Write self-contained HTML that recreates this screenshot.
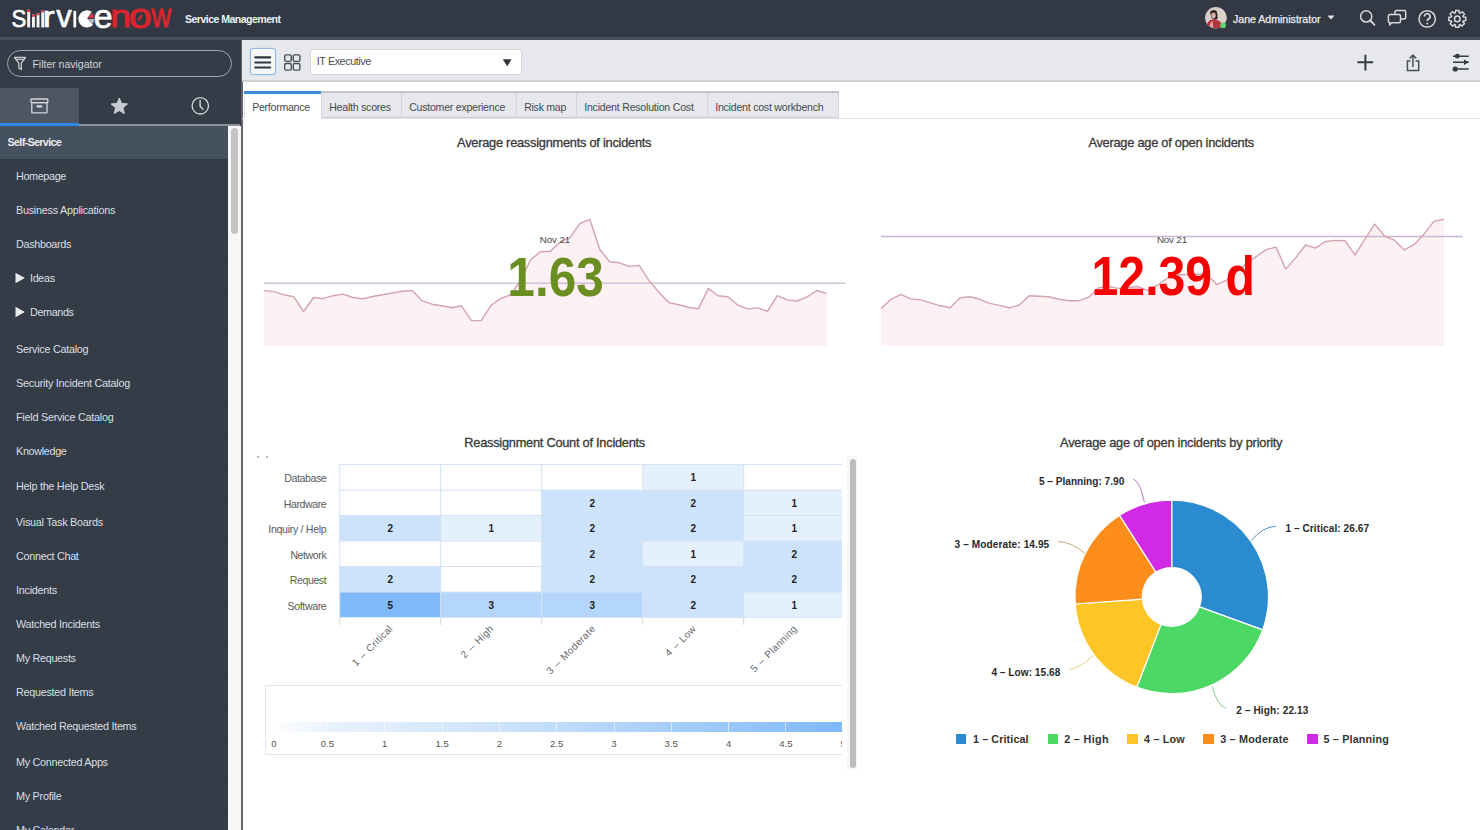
<!DOCTYPE html><html><head><meta charset="utf-8"><style>
*{box-sizing:border-box;margin:0;padding:0}
html,body{width:1480px;height:830px;overflow:hidden;background:#fff;font-family:"Liberation Sans",sans-serif}
.a{position:absolute;white-space:nowrap}
svg{position:absolute;overflow:visible}
</style></head><body>
<div class="a" style="left:0;top:0;width:1480px;height:37px;background:#323945"></div>
<div class="a" style="left:0;top:37px;width:1480px;height:3px;background:#46525e"></div>
<svg style="left:0;top:0" width="200" height="37"><text transform="translate(11.39,27.20) scale(0.897,1)" font-family="Liberation Sans" font-weight="normal" font-size="24.78" fill="#fff" stroke="#fff" stroke-width="0.7" stroke-linejoin="round">S</text><rect x="27.2" y="9.8" width="2.9" height="17.6" fill="#f4f4f4"/><rect x="27.2" y="9.8" width="2.9" height="2.2" fill="#d33a3f"/><rect x="32" y="14.6" width="2.9" height="12.8" fill="#f4f4f4"/><rect x="32" y="14.6" width="2.9" height="2.2" fill="#d33a3f"/><rect x="36.6" y="13.1" width="2.9" height="14.3" fill="#f4f4f4"/><rect x="36.6" y="13.1" width="2.9" height="2.2" fill="#d33a3f"/><rect x="41.3" y="10.1" width="2.9" height="17.3" fill="#f4f4f4"/><rect x="41.3" y="10.1" width="2.9" height="2.2" fill="#d33a3f"/><text transform="translate(42.74,27.40) scale(1.190,1)" font-family="Liberation Sans" font-weight="normal" font-size="29.92" fill="#fff" stroke="#fff" stroke-width="0.7" stroke-linejoin="round">r</text><text transform="translate(56.19,27.40) scale(1.018,1)" font-family="Liberation Sans" font-weight="normal" font-size="30.47" fill="#fff" stroke="#fff" stroke-width="0.7" stroke-linejoin="round">v</text><rect x="73.4" y="10.9" width="2.8" height="16.5" fill="#fff"/><g transform="translate(87.2,18.6)"><path d="M0,0 L4.6,-6.8 A8.6,8.6 0 1,0 5.9,6.3 Z" fill="#fff"/><path d="M0.6,-0.6 L4.5,-5.6 A7,7 0 0,1 7.1,-0.6 Z" fill="#d9353b"/><path d="M0.6,0.4 L7.1,0.4 A7,7 0 0,1 5,5.4 Z" fill="#b8bcc2"/></g><text transform="translate(93.86,27.50) scale(1.019,1)" font-family="Liberation Sans" font-weight="normal" font-size="33.27" fill="#fff" stroke="#fff" stroke-width="0.7" stroke-linejoin="round">e</text><text transform="translate(110.23,27.40) scale(1.157,1)" font-family="Liberation Sans" font-weight="normal" font-size="32.15" fill="#d9252c" stroke="#d9252c" stroke-width="1.0" stroke-linejoin="round">n</text><text transform="translate(128.87,28.30) scale(1.188,1)" font-family="Liberation Sans" font-weight="normal" font-size="34.75" fill="#d9252c" stroke="#d9252c" stroke-width="1.0" stroke-linejoin="round">o</text><path d="M138.6,19.9 L141.2,16" stroke="#d9252c" stroke-width="2.2" stroke-linecap="round"/><text transform="translate(151.54,27.40) scale(0.829,1)" font-family="Liberation Sans" font-weight="normal" font-size="32.75" fill="#d9252c" stroke="#d9252c" stroke-width="1.0" stroke-linejoin="round">w</text></svg>
<div class="a" style="left:185.0px;top:13.6px;font-size:10.6px;line-height:10.6px;color:#eef0f2;font-weight:bold;letter-spacing:-0.556px;">Service Management</div>
<svg style="left:1205px;top:7px" width="24" height="24">
<defs><clipPath id="av"><circle cx="10.8" cy="10.8" r="10.7"/></clipPath></defs>
<g clip-path="url(#av)">
<rect x="0" y="0" width="22" height="22" fill="#d6cdc8"/>
<rect x="13" y="2" width="9" height="12" fill="#ddd2c6"/>
<path d="M5,5 Q8,1.5 11.5,4 Q13,8 12.5,12 L9.5,13 L6.5,11Z" fill="#2c2222"/>
<ellipse cx="8.5" cy="8.5" rx="2.2" ry="3" fill="#d9b0a8"/>
<path d="M1,22 Q2,13 7,12.5 L12,13 Q17,14 18,22Z" fill="#b5343a"/>
<path d="M4,22 Q5,15 7.5,14 L8.5,22Z" fill="#dca9a4"/>
</g>
<circle cx="18.1" cy="18.3" r="2.9" fill="#5fd86f"/>
</svg>
<div class="a" style="left:1233.0px;top:13.6px;font-size:10.6px;line-height:10.6px;color:#eef0f2;font-weight:normal;letter-spacing:-0.011px;-webkit-text-stroke:0.25px #eef0f2;">Jane Administrator</div>
<svg style="left:1327px;top:15px" width="9" height="6"><path d="M0.5,0.5 L7.5,0.5 L4,4.5Z" fill="#e4e6e9"/></svg>
<svg style="left:1355px;top:6px" width="120" height="26" fill="none" stroke="#d7dadd" stroke-width="1.5">
<circle cx="11.2" cy="10.4" r="5.6"/><path d="M15.3,14.5 L19.5,18.8" stroke-width="1.8" stroke-linecap="round"/>
<rect x="39.9" y="4.6" width="10.8" height="8.5" rx="1.5"/>
<path d="M34.4,8.4 h9.6 a1.5,1.5 0 0 1 1.5,1.5 v5.3 a1.5,1.5 0 0 1 -1.5,1.5 h-7 l-2.2,1.9 v-1.9 a1.5,1.5 0 0 1 -1.4,-1.5 v-5.3 a1.5,1.5 0 0 1 1.5,-1.5z" fill="#323945"/>
<circle cx="72.2" cy="12.9" r="8.2"/>
<path d="M69.4,10.6 a2.8,2.8 0 1 1 3.9,2.5 c-0.9,0.4 -1.1,1 -1.1,2" stroke-width="1.7"/>
<circle cx="72.2" cy="17.6" r="0.6" fill="#d7dadd" stroke-width="1"/>
</svg>
<svg style="left:0;top:0" width="1480" height="40"><path d="M1455.30,12.93 L1455.66,10.46 L1458.94,10.46 L1459.30,12.93 L1460.11,13.26 L1462.11,11.77 L1464.43,14.09 L1462.94,16.09 L1463.27,16.90 L1465.74,17.26 L1465.74,20.54 L1463.27,20.90 L1462.94,21.71 L1464.43,23.71 L1462.11,26.03 L1460.11,24.54 L1459.30,24.87 L1458.94,27.34 L1455.66,27.34 L1455.30,24.87 L1454.49,24.54 L1452.49,26.03 L1450.17,23.71 L1451.66,21.71 L1451.33,20.90 L1448.86,20.54 L1448.86,17.26 L1451.33,16.90 L1451.66,16.09 L1450.17,14.09 L1452.49,11.77 L1454.49,13.26Z" fill="none" stroke="#d7dadd" stroke-width="1.5" stroke-linejoin="round"/><circle cx="1457.3" cy="18.9" r="2.8" fill="none" stroke="#d7dadd" stroke-width="1.5"/></svg>
<div class="a" style="left:0;top:40px;width:241px;height:790px;background:#343c47"></div>
<div class="a" style="left:7px;top:50.2px;width:225px;height:27.3px;border:1.7px solid #a3a8ae;border-radius:14px"></div>
<svg style="left:13px;top:56px" width="16" height="17"><path d="M1.5,1.5 H12.5 L8.3,7.2 V13.5 L5.8,12 V7.2 Z" fill="none" stroke="#c9cdd2" stroke-width="1.3" stroke-linejoin="round"/><path d="M3,3.5 H11" stroke="#c9cdd2" stroke-width="1"/></svg>
<div class="a" style="left:32.4px;top:58.7px;font-size:10.5px;line-height:10.5px;color:#d3d6da;font-weight:normal;letter-spacing:-0.003px;">Filter navigator</div>
<div class="a" style="left:0;top:88px;width:79px;height:35px;background:#4d5662"></div>
<div class="a" style="left:0;top:123px;width:79px;height:3px;background:#2c88e6"></div>
<div class="a" style="left:79px;top:124px;width:161px;height:2px;background:#8d9298"></div>
<svg style="left:0;top:88px" width="240" height="35" fill="none" stroke="#d5d8dc" stroke-width="1.3">
<rect x="31" y="11" width="16.8" height="3.6" rx="0.6"/>
<rect x="31.8" y="14.6" width="15.2" height="10.2" rx="0.6"/>
<rect x="36.3" y="17.2" width="6.2" height="2.2" rx="1.1" fill="#d5d8dc" stroke="none"/>
<circle cx="200.3" cy="17.8" r="8.2"/>
<path d="M200.1,12 V18.2 L203.4,21.8" stroke-width="1.4"/>
</svg>
<svg style="left:0;top:0" width="240" height="130"><path d="M119.30,98.00 L121.59,103.44 L127.48,103.94 L123.01,107.81 L124.35,113.56 L119.30,110.50 L114.25,113.56 L115.59,107.81 L111.12,103.94 L117.01,103.44Z" fill="#c8ccd2" stroke="#c8ccd2" stroke-width="1" stroke-linejoin="round"/></svg>
<div class="a" style="left:0;top:126px;width:228px;height:33px;background:#465160"></div>
<div class="a" style="left:7.5px;top:136.7px;font-size:10.8px;line-height:10.8px;color:#e8eaed;font-weight:bold;letter-spacing:-0.685px;">Self-Service</div>
<div class="a" style="left:228px;top:126px;width:12.5px;height:704px;background:#f7f7f7"></div>
<div class="a" style="left:231px;top:128px;width:7px;height:106px;border-radius:4px;background:#c3c3c3"></div>
<div class="a" style="left:240.5px;top:40px;width:2px;height:790px;background:#62666c"></div>
<div class="a" style="left:16.0px;top:171.4px;font-size:10.8px;line-height:10.8px;color:#dcdfe3;font-weight:normal;letter-spacing:-0.362px;">Homepage</div>
<div class="a" style="left:16.0px;top:205.4px;font-size:10.8px;line-height:10.8px;color:#dcdfe3;font-weight:normal;letter-spacing:-0.251px;">Business Applications</div>
<div class="a" style="left:0;top:192px;width:228px;height:1px;background:#313842"></div>
<div class="a" style="left:16.0px;top:239.4px;font-size:10.8px;line-height:10.8px;color:#dcdfe3;font-weight:normal;letter-spacing:-0.311px;">Dashboards</div>
<div class="a" style="left:0;top:226px;width:228px;height:1px;background:#313842"></div>
<svg style="left:15px;top:271.7px" width="12" height="13"><path d="M0.5,0.8 L9.9,6 L0.5,11.3Z" fill="#e8eaed"/></svg>
<div class="a" style="left:30.0px;top:273.4px;font-size:10.8px;line-height:10.8px;color:#dcdfe3;font-weight:normal;letter-spacing:-0.317px;">Ideas</div>
<div class="a" style="left:0;top:260px;width:228px;height:1px;background:#313842"></div>
<svg style="left:15px;top:305.7px" width="12" height="13"><path d="M0.5,0.8 L9.9,6 L0.5,11.3Z" fill="#e8eaed"/></svg>
<div class="a" style="left:30.0px;top:307.4px;font-size:10.8px;line-height:10.8px;color:#dcdfe3;font-weight:normal;letter-spacing:-0.370px;">Demands</div>
<div class="a" style="left:0;top:294px;width:228px;height:1px;background:#313842"></div>
<div class="a" style="left:16.0px;top:344.4px;font-size:10.8px;line-height:10.8px;color:#dcdfe3;font-weight:normal;letter-spacing:-0.261px;">Service Catalog</div>
<div class="a" style="left:0;top:330px;width:228px;height:1px;background:#313842"></div>
<div class="a" style="left:16.0px;top:378.4px;font-size:10.8px;line-height:10.8px;color:#dcdfe3;font-weight:normal;letter-spacing:-0.240px;">Security Incident Catalog</div>
<div class="a" style="left:0;top:366px;width:228px;height:1px;background:#313842"></div>
<div class="a" style="left:16.0px;top:412.4px;font-size:10.8px;line-height:10.8px;color:#dcdfe3;font-weight:normal;letter-spacing:-0.246px;">Field Service Catalog</div>
<div class="a" style="left:0;top:400px;width:228px;height:1px;background:#313842"></div>
<div class="a" style="left:16.0px;top:446.4px;font-size:10.8px;line-height:10.8px;color:#dcdfe3;font-weight:normal;letter-spacing:-0.321px;">Knowledge</div>
<div class="a" style="left:0;top:434px;width:228px;height:1px;background:#313842"></div>
<div class="a" style="left:16.0px;top:480.9px;font-size:10.8px;line-height:10.8px;color:#dcdfe3;font-weight:normal;letter-spacing:-0.263px;">Help the Help Desk</div>
<div class="a" style="left:0;top:468px;width:228px;height:1px;background:#313842"></div>
<div class="a" style="left:16.0px;top:516.9px;font-size:10.8px;line-height:10.8px;color:#dcdfe3;font-weight:normal;letter-spacing:-0.258px;">Visual Task Boards</div>
<div class="a" style="left:0;top:503px;width:228px;height:1px;background:#313842"></div>
<div class="a" style="left:16.0px;top:550.9px;font-size:10.8px;line-height:10.8px;color:#dcdfe3;font-weight:normal;letter-spacing:-0.288px;">Connect Chat</div>
<div class="a" style="left:0;top:538px;width:228px;height:1px;background:#313842"></div>
<div class="a" style="left:16.0px;top:584.9px;font-size:10.8px;line-height:10.8px;color:#dcdfe3;font-weight:normal;letter-spacing:-0.259px;">Incidents</div>
<div class="a" style="left:0;top:572px;width:228px;height:1px;background:#313842"></div>
<div class="a" style="left:16.0px;top:618.9px;font-size:10.8px;line-height:10.8px;color:#dcdfe3;font-weight:normal;letter-spacing:-0.265px;">Watched Incidents</div>
<div class="a" style="left:0;top:606px;width:228px;height:1px;background:#313842"></div>
<div class="a" style="left:16.0px;top:652.9px;font-size:10.8px;line-height:10.8px;color:#dcdfe3;font-weight:normal;letter-spacing:-0.303px;">My Requests</div>
<div class="a" style="left:0;top:640px;width:228px;height:1px;background:#313842"></div>
<div class="a" style="left:16.0px;top:686.9px;font-size:10.8px;line-height:10.8px;color:#dcdfe3;font-weight:normal;letter-spacing:-0.280px;">Requested Items</div>
<div class="a" style="left:0;top:674px;width:228px;height:1px;background:#313842"></div>
<div class="a" style="left:16.0px;top:720.9px;font-size:10.8px;line-height:10.8px;color:#dcdfe3;font-weight:normal;letter-spacing:-0.277px;">Watched Requested Items</div>
<div class="a" style="left:0;top:708px;width:228px;height:1px;background:#313842"></div>
<div class="a" style="left:16.0px;top:756.9px;font-size:10.8px;line-height:10.8px;color:#dcdfe3;font-weight:normal;letter-spacing:-0.290px;">My Connected Apps</div>
<div class="a" style="left:0;top:743px;width:228px;height:1px;background:#313842"></div>
<div class="a" style="left:16.0px;top:790.9px;font-size:10.8px;line-height:10.8px;color:#dcdfe3;font-weight:normal;letter-spacing:-0.256px;">My Profile</div>
<div class="a" style="left:0;top:778px;width:228px;height:1px;background:#313842"></div>
<div class="a" style="left:16.0px;top:824.9px;font-size:10.8px;line-height:10.8px;color:#dcdfe3;font-weight:normal;letter-spacing:-0.294px;">My Calendar</div>
<div class="a" style="left:0;top:812px;width:228px;height:1px;background:#313842"></div>
<div class="a" style="left:242px;top:40px;width:1238px;height:40px;background:#e6e8eb"></div>
<div class="a" style="left:242px;top:80px;width:1238px;height:1.5px;background:#cdd0d4"></div>
<div class="a" style="left:249.5px;top:48px;width:26px;height:27px;border:1.3px solid #8fb8e6;border-radius:3px;background:#f4f6f8;box-shadow:0 0 2px #b9d3f0"></div>
<svg style="left:249px;top:48px" width="28" height="28"><path d="M6.3,9.4 H21.2 M6.3,14.5 H21.2 M6.3,19.5 H21.2" stroke="#2f3540" stroke-width="2.1" stroke-linecap="round"/></svg>
<svg style="left:283px;top:53px" width="20" height="20" fill="none" stroke="#4a5058" stroke-width="1.4"><rect x="1.7" y="1.9" width="6.6" height="6.5" rx="1.4"/><rect x="10.3" y="1.9" width="6.6" height="6.5" rx="1.4"/><rect x="1.7" y="10.5" width="6.6" height="6.6" rx="1.4"/><rect x="10.3" y="10.5" width="6.6" height="6.6" rx="1.4"/></svg>
<div class="a" style="left:309.5px;top:48.5px;width:212px;height:26px;border:1px solid #d5d8dc;border-radius:3px;background:#fff"></div>
<div class="a" style="left:316.8px;top:56.2px;font-size:10.8px;line-height:10.8px;color:#4a4d52;font-weight:normal;letter-spacing:-0.439px;">IT Executive</div>
<svg style="left:502px;top:58px" width="11" height="10"><path d="M0.8,1.2 H9.6 L5.2,8.2Z" fill="#2f3338"/></svg>
<svg style="left:1340px;top:42px" width="140" height="38">
<path d="M17.5,20.3 H33.1 M25.4,12.8 V28.4" stroke="#353b45" stroke-width="2"/>
<path d="M70.5,19 H67.4 V28.4 H78.7 V19 H75.6" fill="none" stroke="#4a4f57" stroke-width="1.5"/>
<path d="M72.9,25 V14 M69.6,16.5 L72.9,13 L76.2,16.5" fill="none" stroke="#4a4f57" stroke-width="1.5"/>
<path d="M113,14.2 H128.7 M113,20.3 H128.7 M113,27 H128.7" stroke="#353b45" stroke-width="1.5"/>
<circle cx="117.3" cy="14.2" r="2.4" fill="#353b45"/>
<path d="M124,17.6 L128.7,20.3 L124,23Z" fill="#353b45"/>
<circle cx="115.2" cy="27" r="2.6" fill="#353b45"/>
</svg>
<div class="a" style="left:242px;top:117.5px;width:1238px;height:1px;background:#e3e5e8"></div>
<div class="a" style="left:244px;top:91px;width:77px;height:28px;background:#fff;border-left:1px solid #e1e3e6"></div>
<div class="a" style="left:244px;top:91px;width:77px;height:3px;background:#3d8ddb"></div>
<div class="a" style="left:252.2px;top:101.8px;font-size:10.6px;line-height:10.6px;color:#474a4f;font-weight:normal;letter-spacing:-0.273px;">Performance</div>
<div class="a" style="left:321px;top:91px;width:81px;height:27px;background:#e6e8eb;border-left:1px solid #d2d5d9;border-right:1px solid #d2d5d9;border-bottom:1px solid #c9ccd0"></div>
<div class="a" style="left:321px;top:91px;width:81px;height:2px;background:#c0c3c7"></div>
<div class="a" style="left:329.2px;top:101.8px;font-size:10.6px;line-height:10.6px;color:#474a4f;font-weight:normal;letter-spacing:-0.243px;">Health scores</div>
<div class="a" style="left:401px;top:91px;width:116px;height:27px;background:#e6e8eb;border-left:1px solid #d2d5d9;border-right:1px solid #d2d5d9;border-bottom:1px solid #c9ccd0"></div>
<div class="a" style="left:401px;top:91px;width:116px;height:2px;background:#c0c3c7"></div>
<div class="a" style="left:409.2px;top:101.8px;font-size:10.6px;line-height:10.6px;color:#474a4f;font-weight:normal;letter-spacing:-0.252px;">Customer experience</div>
<div class="a" style="left:516px;top:91px;width:61px;height:27px;background:#e6e8eb;border-left:1px solid #d2d5d9;border-right:1px solid #d2d5d9;border-bottom:1px solid #c9ccd0"></div>
<div class="a" style="left:516px;top:91px;width:61px;height:2px;background:#c0c3c7"></div>
<div class="a" style="left:524.2px;top:101.8px;font-size:10.6px;line-height:10.6px;color:#474a4f;font-weight:normal;letter-spacing:-0.284px;">Risk map</div>
<div class="a" style="left:576px;top:91px;width:132px;height:27px;background:#e6e8eb;border-left:1px solid #d2d5d9;border-right:1px solid #d2d5d9;border-bottom:1px solid #c9ccd0"></div>
<div class="a" style="left:576px;top:91px;width:132px;height:2px;background:#c0c3c7"></div>
<div class="a" style="left:584.2px;top:101.8px;font-size:10.6px;line-height:10.6px;color:#474a4f;font-weight:normal;letter-spacing:-0.225px;">Incident Resolution Cost</div>
<div class="a" style="left:707px;top:91px;width:132px;height:27px;background:#e6e8eb;border-left:1px solid #d2d5d9;border-right:1px solid #d2d5d9;border-bottom:1px solid #c9ccd0"></div>
<div class="a" style="left:707px;top:91px;width:132px;height:2px;background:#c0c3c7"></div>
<div class="a" style="left:715.2px;top:101.8px;font-size:10.6px;line-height:10.6px;color:#474a4f;font-weight:normal;letter-spacing:-0.233px;">Incident cost workbench</div>
<div class="a" style="left:457.1px;top:137.2px;font-size:12.8px;line-height:12.8px;color:#383838;font-weight:normal;letter-spacing:-0.246px;-webkit-text-stroke:0.3px #383838;">Average reassignments of incidents</div>
<div class="a" style="left:1088.4px;top:137.2px;font-size:12.8px;line-height:12.8px;color:#383838;font-weight:normal;letter-spacing:-0.247px;-webkit-text-stroke:0.3px #383838;">Average age of open incidents</div>
<div class="a" style="left:464.3px;top:436.7px;font-size:12.8px;line-height:12.8px;color:#383838;font-weight:normal;letter-spacing:-0.251px;-webkit-text-stroke:0.3px #383838;">Reassignment Count of Incidents</div>
<div class="a" style="left:1060.1px;top:436.7px;font-size:12.8px;line-height:12.8px;color:#383838;font-weight:normal;letter-spacing:-0.232px;-webkit-text-stroke:0.3px #383838;">Average age of open incidents by priority</div>
<svg style="left:0;top:0" width="1480" height="400"><path d="M264.1,346 L264.1,290.6 L274.0,291.6 L283.8,294.7 L293.7,296.7 L303.6,311.5 L313.5,297.5 L323.3,298.7 L333.2,295.7 L343.1,294.1 L352.9,297.5 L362.8,298.7 L372.7,296.5 L382.5,294.7 L392.4,293.0 L402.3,291.2 L412.2,290.6 L422.0,300.7 L431.9,304.2 L441.8,305.8 L451.6,307.8 L461.5,305.8 L471.4,320.6 L481.2,320.6 L491.1,305.4 L501.0,298.3 L510.9,294.7 L520.7,280.1 L530.6,259.8 L540.5,251.7 L550.3,251.3 L560.2,241.9 L570.1,237.7 L579.9,223.5 L589.8,219.3 L599.7,249.2 L609.6,261.8 L619.4,262.8 L629.3,266.4 L639.2,265.4 L649.0,280.6 L658.9,292.2 L668.8,302.6 L678.6,304.7 L688.5,307.2 L698.4,308.9 L708.3,288.4 L718.1,295.7 L728.0,296.8 L737.9,305.2 L747.7,308.9 L757.6,307.9 L767.5,311.4 L777.3,295.7 L787.2,299.9 L797.1,301.0 L807.0,296.8 L816.8,290.5 L826.7,293.6 L826.7,346Z" fill="#fdf1f3"/><path d="M264.1,283.1 H845.6" stroke="#c9b6d2" stroke-width="1.3"/><polyline points="264.1,290.6 274.0,291.6 283.8,294.7 293.7,296.7 303.6,311.5 313.5,297.5 323.3,298.7 333.2,295.7 343.1,294.1 352.9,297.5 362.8,298.7 372.7,296.5 382.5,294.7 392.4,293.0 402.3,291.2 412.2,290.6 422.0,300.7 431.9,304.2 441.8,305.8 451.6,307.8 461.5,305.8 471.4,320.6 481.2,320.6 491.1,305.4 501.0,298.3 510.9,294.7 520.7,280.1 530.6,259.8 540.5,251.7 550.3,251.3 560.2,241.9 570.1,237.7 579.9,223.5 589.8,219.3 599.7,249.2 609.6,261.8 619.4,262.8 629.3,266.4 639.2,265.4 649.0,280.6 658.9,292.2 668.8,302.6 678.6,304.7 688.5,307.2 698.4,308.9 708.3,288.4 718.1,295.7 728.0,296.8 737.9,305.2 747.7,308.9 757.6,307.9 767.5,311.4 777.3,295.7 787.2,299.9 797.1,301.0 807.0,296.8 816.8,290.5 826.7,293.6" fill="none" stroke="#d4a3ae" stroke-width="1.4" stroke-linejoin="round"/></svg>
<svg style="left:0;top:0" width="1480" height="400"><path d="M881.1,346 L881.1,308.5 L891.0,299.3 L900.8,294.3 L910.7,298.9 L920.6,299.9 L930.5,302.8 L940.3,305.8 L950.2,307.8 L960.1,297.7 L969.9,296.7 L979.8,299.3 L989.7,303.4 L999.6,305.4 L1009.4,307.8 L1019.3,305.0 L1029.2,295.7 L1039.1,296.3 L1048.9,296.7 L1058.8,299.3 L1068.7,300.7 L1078.5,300.7 L1088.4,297.4 L1098.3,288.0 L1108.2,286.5 L1118.0,288.4 L1127.9,287.5 L1137.8,286.5 L1147.6,290.3 L1157.5,285.2 L1167.4,278.1 L1177.3,275.0 L1187.1,274.5 L1197.0,274.3 L1206.9,274.5 L1216.7,284.6 L1226.6,280.2 L1236.5,272.0 L1246.4,263.5 L1256.2,256.6 L1266.1,249.6 L1276.0,247.1 L1285.8,269.1 L1295.7,257.6 L1305.6,245.0 L1315.5,248.2 L1325.3,241.5 L1335.2,240.4 L1345.1,240.8 L1355.0,254.9 L1364.8,239.4 L1374.7,224.1 L1384.6,236.0 L1394.4,240.2 L1404.3,249.9 L1414.2,244.4 L1424.1,233.9 L1433.9,221.4 L1443.8,219.3 L1443.8,346Z" fill="#fdf1f3"/><path d="M881.1,236.5 H1462.7" stroke="#c9b6d2" stroke-width="1.3"/><polyline points="881.1,308.5 891.0,299.3 900.8,294.3 910.7,298.9 920.6,299.9 930.5,302.8 940.3,305.8 950.2,307.8 960.1,297.7 969.9,296.7 979.8,299.3 989.7,303.4 999.6,305.4 1009.4,307.8 1019.3,305.0 1029.2,295.7 1039.1,296.3 1048.9,296.7 1058.8,299.3 1068.7,300.7 1078.5,300.7 1088.4,297.4 1098.3,288.0 1108.2,286.5 1118.0,288.4 1127.9,287.5 1137.8,286.5 1147.6,290.3 1157.5,285.2 1167.4,278.1 1177.3,275.0 1187.1,274.5 1197.0,274.3 1206.9,274.5 1216.7,284.6 1226.6,280.2 1236.5,272.0 1246.4,263.5 1256.2,256.6 1266.1,249.6 1276.0,247.1 1285.8,269.1 1295.7,257.6 1305.6,245.0 1315.5,248.2 1325.3,241.5 1335.2,240.4 1345.1,240.8 1355.0,254.9 1364.8,239.4 1374.7,224.1 1384.6,236.0 1394.4,240.2 1404.3,249.9 1414.2,244.4 1424.1,233.9 1433.9,221.4 1443.8,219.3" fill="none" stroke="#d4a3ae" stroke-width="1.4" stroke-linejoin="round"/></svg>
<div class="a" style="left:539.8px;top:235.2px;font-size:9.8px;line-height:9.8px;color:#4b4b4b;font-weight:normal;letter-spacing:-0.130px;">Nov 21</div>
<div class="a" style="left:1156.9px;top:235.2px;font-size:9.8px;line-height:9.8px;color:#4b4b4b;font-weight:normal;letter-spacing:-0.170px;">Nov 21</div>
<div class="a" style="left:502.1px;top:249.6px;font-size:55px;line-height:55px;font-weight:bold;color:#6b8e23;transform:scaleX(0.900);transform-origin:center">1.63</div>
<div class="a" style="left:1079.7px;top:249.4px;font-size:55px;line-height:55px;font-weight:bold;color:#f70000;transform:scaleX(0.876);transform-origin:center">12.39 d</div>
<svg style="left:0;top:0" width="1480" height="830"><defs><clipPath id="hc"><rect x="250" y="450" width="592" height="320"/></clipPath></defs><g clip-path="url(#hc)"><rect x="339.7" y="464.6" width="101" height="25.47" fill="#ffffff"/><rect x="440.7" y="464.6" width="101" height="25.47" fill="#ffffff"/><rect x="541.7" y="464.6" width="101" height="25.47" fill="#ffffff"/><rect x="642.7" y="464.6" width="101" height="25.47" fill="#e5f0fd"/><rect x="743.7" y="464.6" width="101" height="25.47" fill="#ffffff"/><rect x="339.7" y="490.1" width="101" height="25.47" fill="#ffffff"/><rect x="440.7" y="490.1" width="101" height="25.47" fill="#ffffff"/><rect x="541.7" y="490.1" width="101" height="25.47" fill="#cde3fb"/><rect x="642.7" y="490.1" width="101" height="25.47" fill="#cde3fb"/><rect x="743.7" y="490.1" width="101" height="25.47" fill="#e5f0fd"/><rect x="339.7" y="515.5" width="101" height="25.47" fill="#cde3fb"/><rect x="440.7" y="515.5" width="101" height="25.47" fill="#e5f0fd"/><rect x="541.7" y="515.5" width="101" height="25.47" fill="#cde3fb"/><rect x="642.7" y="515.5" width="101" height="25.47" fill="#cde3fb"/><rect x="743.7" y="515.5" width="101" height="25.47" fill="#e5f0fd"/><rect x="339.7" y="541.0" width="101" height="25.47" fill="#ffffff"/><rect x="440.7" y="541.0" width="101" height="25.47" fill="#ffffff"/><rect x="541.7" y="541.0" width="101" height="25.47" fill="#cde3fb"/><rect x="642.7" y="541.0" width="101" height="25.47" fill="#e5f0fd"/><rect x="743.7" y="541.0" width="101" height="25.47" fill="#cde3fb"/><rect x="339.7" y="566.5" width="101" height="25.47" fill="#cde3fb"/><rect x="440.7" y="566.5" width="101" height="25.47" fill="#ffffff"/><rect x="541.7" y="566.5" width="101" height="25.47" fill="#cde3fb"/><rect x="642.7" y="566.5" width="101" height="25.47" fill="#cde3fb"/><rect x="743.7" y="566.5" width="101" height="25.47" fill="#cde3fb"/><rect x="339.7" y="592.0" width="101" height="25.47" fill="#80b9f8"/><rect x="440.7" y="592.0" width="101" height="25.47" fill="#b5d6fb"/><rect x="541.7" y="592.0" width="101" height="25.47" fill="#b5d6fb"/><rect x="642.7" y="592.0" width="101" height="25.47" fill="#cde3fb"/><rect x="743.7" y="592.0" width="101" height="25.47" fill="#e5f0fd"/><path d="M339.7,464.6 H846" stroke="#d2e2f4" stroke-width="1"/><path d="M339.7,490.1 H846" stroke="#d2e2f4" stroke-width="1"/><path d="M339.7,515.5 H846" stroke="#d2e2f4" stroke-width="1"/><path d="M339.7,541.0 H846" stroke="#d2e2f4" stroke-width="1"/><path d="M339.7,566.5 H846" stroke="#d2e2f4" stroke-width="1"/><path d="M339.7,592.0 H846" stroke="#d2e2f4" stroke-width="1"/><path d="M339.7,617.4 H846" stroke="#d2e2f4" stroke-width="1"/><path d="M339.7,464.6 V617.4" stroke="#d2e2f4" stroke-width="1"/><path d="M339.7,617.4 V625" stroke="#d5d8dc" stroke-width="1"/><path d="M440.7,464.6 V617.4" stroke="#d2e2f4" stroke-width="1"/><path d="M440.7,617.4 V625" stroke="#d5d8dc" stroke-width="1"/><path d="M541.7,464.6 V617.4" stroke="#d2e2f4" stroke-width="1"/><path d="M541.7,617.4 V625" stroke="#d5d8dc" stroke-width="1"/><path d="M642.7,464.6 V617.4" stroke="#d2e2f4" stroke-width="1"/><path d="M642.7,617.4 V625" stroke="#d5d8dc" stroke-width="1"/><path d="M743.7,464.6 V617.4" stroke="#d2e2f4" stroke-width="1"/><path d="M743.7,617.4 V625" stroke="#d5d8dc" stroke-width="1"/><path d="M844.7,464.6 V617.4" stroke="#d2e2f4" stroke-width="1"/><path d="M844.7,617.4 V625" stroke="#d5d8dc" stroke-width="1"/></g><text x="693.2" y="481.1" font-family="Liberation Sans" font-weight="bold" font-size="10" fill="#1f1f1f" text-anchor="middle">1</text><text x="592.2" y="506.6" font-family="Liberation Sans" font-weight="bold" font-size="10" fill="#1f1f1f" text-anchor="middle">2</text><text x="693.2" y="506.6" font-family="Liberation Sans" font-weight="bold" font-size="10" fill="#1f1f1f" text-anchor="middle">2</text><text x="794.2" y="506.6" font-family="Liberation Sans" font-weight="bold" font-size="10" fill="#1f1f1f" text-anchor="middle">1</text><text x="390.2" y="532.0" font-family="Liberation Sans" font-weight="bold" font-size="10" fill="#1f1f1f" text-anchor="middle">2</text><text x="491.2" y="532.0" font-family="Liberation Sans" font-weight="bold" font-size="10" fill="#1f1f1f" text-anchor="middle">1</text><text x="592.2" y="532.0" font-family="Liberation Sans" font-weight="bold" font-size="10" fill="#1f1f1f" text-anchor="middle">2</text><text x="693.2" y="532.0" font-family="Liberation Sans" font-weight="bold" font-size="10" fill="#1f1f1f" text-anchor="middle">2</text><text x="794.2" y="532.0" font-family="Liberation Sans" font-weight="bold" font-size="10" fill="#1f1f1f" text-anchor="middle">1</text><text x="592.2" y="557.5" font-family="Liberation Sans" font-weight="bold" font-size="10" fill="#1f1f1f" text-anchor="middle">2</text><text x="693.2" y="557.5" font-family="Liberation Sans" font-weight="bold" font-size="10" fill="#1f1f1f" text-anchor="middle">1</text><text x="794.2" y="557.5" font-family="Liberation Sans" font-weight="bold" font-size="10" fill="#1f1f1f" text-anchor="middle">2</text><text x="390.2" y="583.0" font-family="Liberation Sans" font-weight="bold" font-size="10" fill="#1f1f1f" text-anchor="middle">2</text><text x="592.2" y="583.0" font-family="Liberation Sans" font-weight="bold" font-size="10" fill="#1f1f1f" text-anchor="middle">2</text><text x="693.2" y="583.0" font-family="Liberation Sans" font-weight="bold" font-size="10" fill="#1f1f1f" text-anchor="middle">2</text><text x="794.2" y="583.0" font-family="Liberation Sans" font-weight="bold" font-size="10" fill="#1f1f1f" text-anchor="middle">2</text><text x="390.2" y="608.5" font-family="Liberation Sans" font-weight="bold" font-size="10" fill="#1f1f1f" text-anchor="middle">5</text><text x="491.2" y="608.5" font-family="Liberation Sans" font-weight="bold" font-size="10" fill="#1f1f1f" text-anchor="middle">3</text><text x="592.2" y="608.5" font-family="Liberation Sans" font-weight="bold" font-size="10" fill="#1f1f1f" text-anchor="middle">3</text><text x="693.2" y="608.5" font-family="Liberation Sans" font-weight="bold" font-size="10" fill="#1f1f1f" text-anchor="middle">2</text><text x="794.2" y="608.5" font-family="Liberation Sans" font-weight="bold" font-size="10" fill="#1f1f1f" text-anchor="middle">1</text></svg>
<div class="a" style="left:284.3px;top:473.1px;font-size:10.6px;line-height:10.6px;color:#575b60;font-weight:normal;letter-spacing:-0.421px;">Database</div>
<div class="a" style="left:283.7px;top:498.6px;font-size:10.6px;line-height:10.6px;color:#575b60;font-weight:normal;letter-spacing:-0.427px;">Hardware</div>
<div class="a" style="left:268.3px;top:524.1px;font-size:10.6px;line-height:10.6px;color:#575b60;font-weight:normal;letter-spacing:-0.312px;">Inquiry / Help</div>
<div class="a" style="left:290.4px;top:549.5px;font-size:10.6px;line-height:10.6px;color:#575b60;font-weight:normal;letter-spacing:-0.421px;">Network</div>
<div class="a" style="left:289.8px;top:575.0px;font-size:10.6px;line-height:10.6px;color:#575b60;font-weight:normal;letter-spacing:-0.428px;">Request</div>
<div class="a" style="left:287.6px;top:600.5px;font-size:10.6px;line-height:10.6px;color:#575b60;font-weight:normal;letter-spacing:-0.388px;">Software</div>
<div class="a" style="left:335.2px;top:624.0px;width:52.5px;text-align:right;font-size:10px;line-height:10px;letter-spacing:0.3px;word-spacing:1px;color:#666a6f;transform-origin:100% 0;transform:rotate(-45deg)">1 – Critical</div>
<div class="a" style="left:447.4px;top:624.0px;width:41.3px;text-align:right;font-size:10px;line-height:10px;letter-spacing:0.3px;word-spacing:1px;color:#666a6f;transform-origin:100% 0;transform:rotate(-45deg)">2 – High</div>
<div class="a" style="left:525.5px;top:624.0px;width:64.2px;text-align:right;font-size:10px;line-height:10px;letter-spacing:0.3px;word-spacing:1px;color:#666a6f;transform-origin:100% 0;transform:rotate(-45deg)">3 – Moderate</div>
<div class="a" style="left:651.9px;top:624.0px;width:38.8px;text-align:right;font-size:10px;line-height:10px;letter-spacing:0.3px;word-spacing:1px;color:#666a6f;transform-origin:100% 0;transform:rotate(-45deg)">4 – Low</div>
<div class="a" style="left:730.8px;top:624.0px;width:60.9px;text-align:right;font-size:10px;line-height:10px;letter-spacing:0.3px;word-spacing:1px;color:#666a6f;transform-origin:100% 0;transform:rotate(-45deg)">5 – Planning</div>
<div class="a" style="left:847px;top:456px;width:10px;height:314px;background:#f7f7f7"></div>
<div class="a" style="left:849.8px;top:458.7px;width:6.2px;height:309.5px;border-radius:3.1px;background:#bdbdbd"></div>
<div class="a" style="left:264.5px;top:684.7px;width:590px;height:70.5px;border:1px solid #e2e4e6;clip-path:inset(0 12px 0 0)"></div>
<div class="a" style="left:270px;top:721.5px;width:572px;height:10px;background:linear-gradient(90deg,#ffffff 0%,#e9f2fd 10%,#cde3fb 40%,#b3d5fb 60%,#80b9f8 100%)"></div>
<div class="a" style="left:271.2px;top:739px;font-size:9.6px;line-height:10px;color:#555">0</div>
<div class="a" style="left:327.0px;top:721.5px;width:1px;height:10px;background:rgba(255,255,255,0.55)"></div>
<div class="a" style="left:320.8px;top:739px;font-size:9.6px;line-height:10px;color:#555">0.5</div>
<div class="a" style="left:384.3px;top:721.5px;width:1px;height:10px;background:rgba(255,255,255,0.55)"></div>
<div class="a" style="left:382.1px;top:739px;font-size:9.6px;line-height:10px;color:#555">1</div>
<div class="a" style="left:441.6px;top:721.5px;width:1px;height:10px;background:rgba(255,255,255,0.55)"></div>
<div class="a" style="left:435.4px;top:739px;font-size:9.6px;line-height:10px;color:#555">1.5</div>
<div class="a" style="left:498.9px;top:721.5px;width:1px;height:10px;background:rgba(255,255,255,0.55)"></div>
<div class="a" style="left:496.7px;top:739px;font-size:9.6px;line-height:10px;color:#555">2</div>
<div class="a" style="left:556.2px;top:721.5px;width:1px;height:10px;background:rgba(255,255,255,0.55)"></div>
<div class="a" style="left:550.0px;top:739px;font-size:9.6px;line-height:10px;color:#555">2.5</div>
<div class="a" style="left:613.5px;top:721.5px;width:1px;height:10px;background:rgba(255,255,255,0.55)"></div>
<div class="a" style="left:611.3px;top:739px;font-size:9.6px;line-height:10px;color:#555">3</div>
<div class="a" style="left:670.8px;top:721.5px;width:1px;height:10px;background:rgba(255,255,255,0.55)"></div>
<div class="a" style="left:664.6px;top:739px;font-size:9.6px;line-height:10px;color:#555">3.5</div>
<div class="a" style="left:728.1px;top:721.5px;width:1px;height:10px;background:rgba(255,255,255,0.55)"></div>
<div class="a" style="left:725.9px;top:739px;font-size:9.6px;line-height:10px;color:#555">4</div>
<div class="a" style="left:785.4px;top:721.5px;width:1px;height:10px;background:rgba(255,255,255,0.55)"></div>
<div class="a" style="left:779.2px;top:739px;font-size:9.6px;line-height:10px;color:#555">4.5</div>
<div class="a" style="left:840.5px;top:739px;font-size:9.6px;line-height:10px;color:#555">5</div>
<div class="a" style="left:842px;top:735px;width:5px;height:15px;background:#fff"></div>
<div class="a" style="left:257px;top:456px;width:1.5px;height:1.5px;background:#bbb"></div><div class="a" style="left:266px;top:456px;width:1.5px;height:1.5px;background:#bbb"></div>
<svg style="left:0;top:0" width="1480" height="830"><path d="M1171.70,500.10 A96.8,96.8 0 0,1 1262.70,629.91 L1199.34,606.93 A29.4,29.4 0 0,0 1171.70,567.50Z" fill="#2b8bd0" stroke="#fff" stroke-width="1.2" stroke-linejoin="round"/><path d="M1262.70,629.91 A96.8,96.8 0 0,1 1136.75,687.17 L1161.08,624.32 A29.4,29.4 0 0,0 1199.34,606.93Z" fill="#4cd864" stroke="#fff" stroke-width="1.2" stroke-linejoin="round"/><path d="M1136.75,687.17 A96.8,96.8 0 0,1 1075.16,603.98 L1142.38,599.05 A29.4,29.4 0 0,0 1161.08,624.32Z" fill="#fdc525" stroke="#fff" stroke-width="1.2" stroke-linejoin="round"/><path d="M1075.16,603.98 A96.8,96.8 0 0,1 1119.60,515.32 L1155.87,572.12 A29.4,29.4 0 0,0 1142.38,599.05Z" fill="#fd8e1b" stroke="#fff" stroke-width="1.2" stroke-linejoin="round"/><path d="M1119.60,515.32 A96.8,96.8 0 0,1 1171.70,500.10 L1171.70,567.50 A29.4,29.4 0 0,0 1155.87,572.12Z" fill="#d12ae6" stroke="#fff" stroke-width="1.2" stroke-linejoin="round"/><path d="M1251.6,540.5 Q1262,527 1276,526.2" fill="none" stroke="#5b8fc0" stroke-width="1"/><path d="M1212.4,686.5 Q1217,706 1226,708.1" fill="none" stroke="#7fd58c" stroke-width="1"/><path d="M1093.5,655.4 Q1080,668 1069.2,669.7" fill="none" stroke="#e6cf7e" stroke-width="1"/><path d="M1084.9,553.4 Q1072,542 1058.2,541.6" fill="none" stroke="#c8a878" stroke-width="1"/><path d="M1144.4,502.2 Q1140,481 1133.2,479.1" fill="none" stroke="#b97ac6" stroke-width="1"/></svg>
<div class="a" style="left:1038.9px;top:477.1px;font-size:10.1px;line-height:10.1px;color:#2a2a2a;font-weight:bold;letter-spacing:0.005px;">5 – Planning: 7.90</div>
<div class="a" style="left:1285.4px;top:524.1px;font-size:10.1px;line-height:10.1px;color:#2a2a2a;font-weight:bold;letter-spacing:0.070px;">1 – Critical: 26.67</div>
<div class="a" style="left:954.6px;top:539.5px;font-size:10.1px;line-height:10.1px;color:#2a2a2a;font-weight:bold;letter-spacing:0.084px;">3 – Moderate: 14.95</div>
<div class="a" style="left:991.4px;top:667.6px;font-size:10.1px;line-height:10.1px;color:#2a2a2a;font-weight:bold;letter-spacing:0.032px;">4 – Low: 15.68</div>
<div class="a" style="left:1236.2px;top:705.5px;font-size:10.1px;line-height:10.1px;color:#2a2a2a;font-weight:bold;letter-spacing:0.105px;">2 – High: 22.13</div>
<div class="a" style="left:955.6px;top:734px;width:10.5px;height:10px;background:#2b8bd0"></div>
<div class="a" style="left:973.0px;top:734.1px;font-size:10.8px;line-height:10.8px;color:#333;font-weight:bold;letter-spacing:0.088px;">1 – Critical</div>
<div class="a" style="left:1047.8px;top:734px;width:10.5px;height:10px;background:#4cd864"></div>
<div class="a" style="left:1064.2px;top:734.1px;font-size:10.8px;line-height:10.8px;color:#333;font-weight:bold;letter-spacing:0.341px;">2 – High</div>
<div class="a" style="left:1127.4px;top:734px;width:10.5px;height:10px;background:#fdc525"></div>
<div class="a" style="left:1144.1px;top:734.1px;font-size:10.8px;line-height:10.8px;color:#333;font-weight:bold;letter-spacing:0.148px;">4 – Low</div>
<div class="a" style="left:1203.4px;top:734px;width:10.5px;height:10px;background:#fd8e1b"></div>
<div class="a" style="left:1220.2px;top:734.1px;font-size:10.8px;line-height:10.8px;color:#333;font-weight:bold;letter-spacing:0.216px;">3 – Moderate</div>
<div class="a" style="left:1307.4px;top:734px;width:10.5px;height:10px;background:#d12ae6"></div>
<div class="a" style="left:1323.5px;top:734.1px;font-size:10.8px;line-height:10.8px;color:#333;font-weight:bold;letter-spacing:0.162px;">5 – Planning</div>
</body></html>
